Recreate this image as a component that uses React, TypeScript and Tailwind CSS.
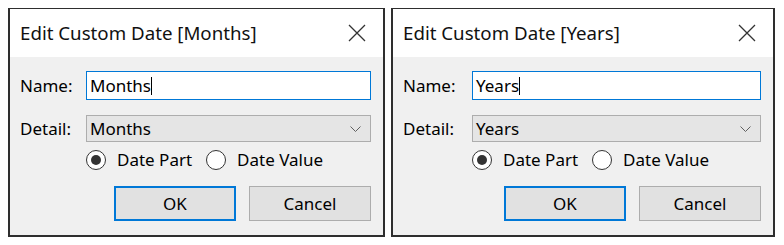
import React from "react";

interface DialogProps {
  title: string;
  value: string;
  width: string;
  labelWidth: string;
}

const CloseIcon = () => (
  <svg width="18" height="18" viewBox="0 0 18 18" className="block">
    <path d="M1 1L17 17M17 1L1 17" stroke="#333" strokeWidth="1.3" fill="none" />
  </svg>
);

const Chevron = () => (
  <svg width="11" height="6" viewBox="0 0 11 6" className="block">
    <path d="M0.5 0.5L5.5 5.5L10.5 0.5" stroke="#606060" strokeWidth="1" fill="none" />
  </svg>
);

const Radio = ({ checked, label }: { checked: boolean; label: string }) => (
  <div className="flex items-center gap-[11px]">
    <div className="w-[20px] h-[20px] rounded-full border border-[#333] bg-white flex items-center justify-center">
      {checked && <div className="w-[10px] h-[10px] rounded-full bg-[#333]" />}
    </div>
    <span>{label}</span>
  </div>
);

const CustomDateDialog: React.FC<DialogProps> = ({ title, value, width, labelWidth }) => {
  return (
    <div
      className={`${width} h-[229px] flex flex-col border-2 border-t border-[#2e2e2e] bg-[#f0f0f0]`}
    >
      {/* Title bar */}
      <div className="h-[48px] bg-white flex items-center justify-between pl-[10px] pr-[17px]">
        <span className="text-[18.7px] text-[#111]">{title}</span>
        <CloseIcon />
      </div>

      {/* Body */}
      <div className="flex-1 pl-[10px] pr-[12px] pt-[14px] text-[17px] text-black">
        <div className="flex items-center">
          <div className={`${labelWidth} shrink-0`}>Name:</div>
          <div className="flex-1 h-[29px] border border-[#0078d7] bg-white flex items-center px-[3px]">
            <span>{value}</span>
            <span className="w-px h-[18px] bg-black" />
          </div>
        </div>

        <div className="flex items-center mt-[15px]">
          <div className={`${labelWidth} shrink-0`}>Detail:</div>
          <div className="flex-1 h-[27px] border border-[#adadad] bg-[#e5e5e5] flex items-center justify-between pl-[3px] pr-[9px]">
            <span>{value}</span>
            <Chevron />
          </div>
        </div>

        <div className="flex mt-[8px] h-[20px]">
          <div className={`${labelWidth} shrink-0`} />
          <div className="flex items-center gap-[14px]">
            <Radio checked label="Date Part" />
            <Radio checked={false} label="Date Value" />
          </div>
        </div>

        <div className="flex justify-end gap-[13px] mt-[16px]">
          <button className="w-[122px] h-[35px] border-2 border-[#0078d7] bg-[#e1e1e1] flex items-center justify-center">
            OK
          </button>
          <button className="w-[122px] h-[35px] border border-[#adadad] bg-[#e1e1e1] flex items-center justify-center">
            Cancel
          </button>
        </div>
      </div>
    </div>
  );
};

export default function App() {
  return (
    <div className="w-[784px] h-[245px] bg-white flex gap-[6px] pl-[8px] pt-[8px] font-['Noto_Sans',sans-serif]">
      <CustomDateDialog title="Edit Custom Date [Months]" value="Months" width="w-[377px]" labelWidth="w-[66px]" />
      <CustomDateDialog title="Edit Custom Date [Years]" value="Years" width="w-[384px]" labelWidth="w-[69px]" />
    </div>
  );
}
